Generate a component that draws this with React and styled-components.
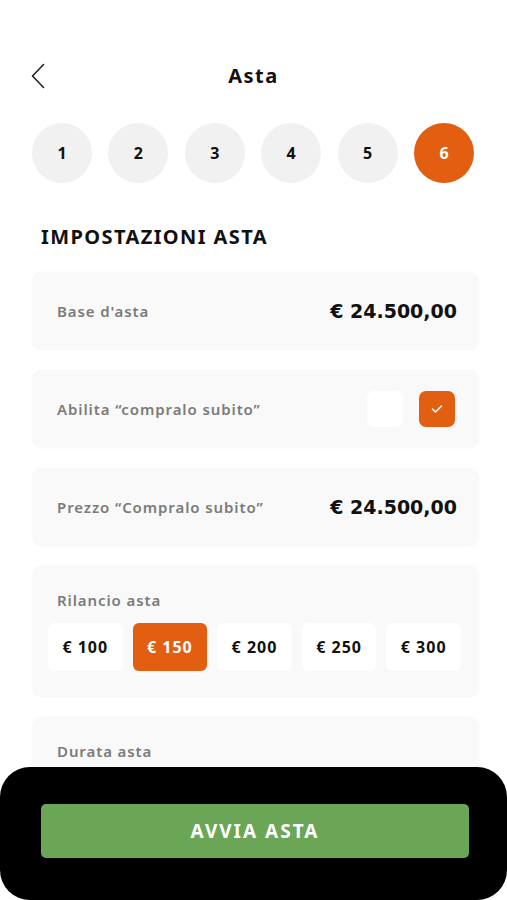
import React from "react";
import styled, { createGlobalStyle } from "styled-components";

const Global = createGlobalStyle`
  html, body { margin: 0; padding: 0; background: #fff; }
  body { font-family: "Noto Sans", "Open Sans", sans-serif; color: #111; }
  * { box-sizing: border-box; }
`;

const Screen = styled.div`
  position: relative;
  width: 507px;
  height: 900px;
  overflow: hidden;
  background: #fff;
`;

const Header = styled.div`
  display: grid;
  grid-template-columns: 60px 1fr 60px;
  align-items: center;
  height: 40px;
  margin-top: 56px;
  padding: 0 0 0 31px;
`;

const BackButton = styled.div`
  display: flex;
  align-items: center;
  height: 40px;
`;

const Title = styled.h1`
  margin: 0;
  text-align: center;
  font-size: 20px;
  font-weight: 700;
  letter-spacing: 1.5px;
  padding-right: 31px;
  margin-top: -2px;
`;

const Steps = styled.div`
  display: flex;
  justify-content: space-between;
  padding: 0 33px 0 32px;
  margin-top: 27px;
`;

const Step = styled.div`
  width: 60px;
  height: 60px;
  border-radius: 50%;
  display: flex;
  align-items: center;
  justify-content: center;
  font-size: 16px;
  font-weight: 700;
  background: ${(p) => (p.$active ? "#e25f12" : "#f1f1f1")};
  color: ${(p) => (p.$active ? "#fff" : "#111")};
`;

const Section = styled.div`
  padding: 0 28px 0 32px;
`;

const Heading = styled.h2`
  margin: 41px 0 22px 9px;
  font-size: 20px;
  font-weight: 700;
  letter-spacing: 1.4px;
  line-height: 26px;
`;

const Cards = styled.div`
  display: flex;
  flex-direction: column;
  gap: 20px;
`;

const Card = styled.div`
  background: #f9f9f9;
  border-radius: 10px;
  box-shadow: 0 0 2px rgba(0, 0, 0, 0.05);
  min-height: 78px;
  padding: ${(p) => (p.$stack ? "23px 18px 26px 16px" : "0 22px 0 25px")};
  display: flex;
  flex-direction: ${(p) => (p.$stack ? "column" : "row")};
  align-items: ${(p) => (p.$stack ? "stretch" : "center")};
  justify-content: ${(p) => (p.$stack ? "flex-start" : "space-between")};
`;

const Label = styled.span`
  font-size: 15px;
  font-weight: 600;
  color: #7b7b7b;
  line-height: 22px;
  letter-spacing: 0.9px;
  padding-left: ${(p) => (p.$indent ? "9px" : "0")};
`;

const Value = styled.span`
  font-family: "DejaVu Sans", "Noto Sans", sans-serif;
  font-size: 19px;
  font-weight: 700;
  color: #111;
`;

const Checks = styled.div`
  display: flex;
  gap: 16px;
  margin-right: 2px;
`;

const CheckBox = styled.div`
  width: 36px;
  height: 36px;
  border-radius: 7px;
  display: flex;
  align-items: center;
  justify-content: center;
  background: ${(p) => (p.$checked ? "#e25f12" : "#fff")};
`;

const Options = styled.div`
  display: flex;
  gap: 10px;
  margin-top: 12px;
`;

const Option = styled.div`
  flex: 1;
  height: 48px;
  border-radius: 6px;
  display: flex;
  align-items: center;
  justify-content: center;
  font-size: 16px;
  font-weight: 700;
  letter-spacing: 1px;
  background: ${(p) => (p.$active ? "#e25f12" : "#fff")};
  color: ${(p) => (p.$active ? "#fff" : "#111")};
`;

const BottomBar = styled.div`
  position: absolute;
  left: 0;
  right: 0;
  bottom: 0;
  height: 133px;
  background: #000;
  border-radius: 30px;
  padding: 37px 38px 0 41px;
`;

const StartButton = styled.button`
  width: 100%;
  height: 54px;
  border: none;
  border-radius: 5px;
  background: #6aa655;
  color: #fff;
  font-family: inherit;
  font-size: 19px;
  font-weight: 700;
  letter-spacing: 2px;
`;

const amounts = [100, 150, 200, 250, 300];

export default function App() {
  return (
    <Screen>
      <Global />
      <Header>
        <BackButton>
          <svg width="14" height="26" viewBox="0 0 14 26" fill="none">
            <path d="M12.5 1.5 L1.5 13 L12.5 24.5" stroke="#222" strokeWidth="1.6" strokeLinecap="round" strokeLinejoin="round" />
          </svg>
        </BackButton>
        <Title>Asta</Title>
        <div />
      </Header>
      <Steps>
        {[1, 2, 3, 4, 5, 6].map((n) => (
          <Step key={n} $active={n === 6}>{n}</Step>
        ))}
      </Steps>
      <Section>
        <Heading>IMPOSTAZIONI ASTA</Heading>
        <Cards>
          <Card>
            <Label>Base d'asta</Label>
            <Value>€ 24.500,00</Value>
          </Card>
          <Card>
            <Label>Abilita “compralo subito”</Label>
            <Checks>
              <CheckBox />
              <CheckBox $checked>
                <svg width="12" height="10" viewBox="0 0 12 10" fill="none">
                  <path d="M1.5 5.2 L4.5 8 L10.5 2" stroke="#fff" strokeWidth="1.6" strokeLinecap="round" strokeLinejoin="round" />
                </svg>
              </CheckBox>
            </Checks>
          </Card>
          <Card>
            <Label>Prezzo “Compralo subito”</Label>
            <Value>€ 24.500,00</Value>
          </Card>
          <Card $stack>
            <Label $indent>Rilancio asta</Label>
            <Options>
              {amounts.map((a) => (
                <Option key={a} $active={a === 150}>€ {a}</Option>
              ))}
            </Options>
          </Card>
          <Card $stack>
            <Label $indent>Durata asta</Label>
          </Card>
        </Cards>
      </Section>
      <BottomBar>
        <StartButton>AVVIA ASTA</StartButton>
      </BottomBar>
    </Screen>
  );
}
